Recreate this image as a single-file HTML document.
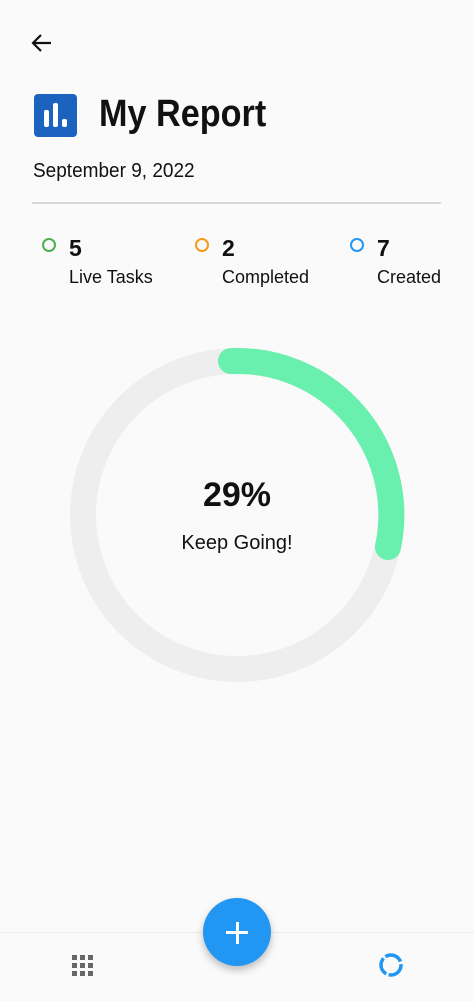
<!DOCTYPE html>
<html><head><style>
body{margin:0;width:474px;height:1000px;background:#fafafa;font-family:"Liberation Sans",sans-serif;position:relative;overflow:hidden;color:#111}
.a{position:absolute}
</style></head><body>
<svg class="a" style="left:30px;top:32px" width="24" height="22" viewBox="0 0 24 22"><path d="M21 11H4M11 3L3 11l8 8" fill="none" stroke="#111" stroke-width="2.2"/></svg>
<div class="a" style="left:34px;top:94px;width:43px;height:43px;background:#1c63c0;border-radius:4px"></div>
<div class="a" style="left:44px;top:110px;width:5px;height:17px;background:#fff;border-radius:2px"></div>
<div class="a" style="left:53px;top:103px;width:5px;height:24px;background:#fff;border-radius:2px"></div>
<div class="a" style="left:62px;top:119px;width:5px;height:8px;background:#fff;border-radius:2px"></div>
<div class="a" style="left:99px;top:93px;font-size:38px;font-weight:bold;transform:scaleX(0.9);transform-origin:left">My Report</div>
<div class="a" style="left:33px;top:160px;font-size:20px;transform:scaleX(0.95);transform-origin:left">September 9, 2022</div>
<div class="a" style="left:32px;top:202px;width:409px;height:2px;background:#d8d8d8"></div>
<div class="a" style="left:42px;top:238px;width:10px;height:10px;border:2px solid #4caf50;border-radius:50%"></div>
<div class="a" style="left:69px;top:235px;font-size:23px;font-weight:bold">5</div>
<div class="a" style="left:69px;top:267px;font-size:18px">Live Tasks</div>
<div class="a" style="left:195px;top:238px;width:10px;height:10px;border:2px solid #f39c1a;border-radius:50%"></div>
<div class="a" style="left:222px;top:235px;font-size:23px;font-weight:bold">2</div>
<div class="a" style="left:222px;top:267px;font-size:18px">Completed</div>
<div class="a" style="left:350px;top:238px;width:10px;height:10px;border:2px solid #2196f3;border-radius:50%"></div>
<div class="a" style="left:377px;top:235px;font-size:23px;font-weight:bold">7</div>
<div class="a" style="left:377px;top:267px;font-size:18px">Created</div>
<svg class="a" style="left:0;top:0" width="474" height="1000">
<circle cx="237" cy="515" r="154" fill="none" stroke="#eeeeee" stroke-width="26"/>
<path d="M231 361.1 A154 154 0 0 1 388 547" fill="none" stroke="#69f0ae" stroke-width="26" stroke-linecap="round"/>
</svg>
<div class="a" style="left:0;width:474px;top:476px;text-align:center;font-size:34px;font-weight:bold">29%</div>
<div class="a" style="left:0;width:474px;top:532px;text-align:center;font-size:20px">Keep Going!</div>
<div class="a" style="left:0;top:932px;width:474px;height:68px;background:#fafafa;border-top:1px solid #eee"></div>
<div class="a" style="left:203px;top:898px;width:68px;height:68px;border-radius:50%;background:#2196f3;box-shadow:0 4px 8px rgba(0,0,0,.25)"></div>
<div class="a" style="left:226px;top:931px;width:22px;height:3px;background:#fff"></div>
<div class="a" style="left:235.5px;top:921.5px;width:3px;height:22px;background:#fff"></div>
<svg class="a" style="left:72px;top:955px" width="21" height="21"><g fill="#666"><rect x="0" y="0" width="5" height="5"/><rect x="8" y="0" width="5" height="5"/><rect x="16" y="0" width="5" height="5"/><rect x="0" y="8" width="5" height="5"/><rect x="8" y="8" width="5" height="5"/><rect x="16" y="8" width="5" height="5"/><rect x="0" y="16" width="5" height="5"/><rect x="8" y="16" width="5" height="5"/><rect x="16" y="16" width="5" height="5"/></g></svg>
<svg class="a" style="left:378px;top:952px" width="26" height="26"><circle cx="13" cy="13" r="10" fill="none" stroke="#2196f3" stroke-width="3.5" stroke-dasharray="18 2.5"/></svg>
</body></html>
